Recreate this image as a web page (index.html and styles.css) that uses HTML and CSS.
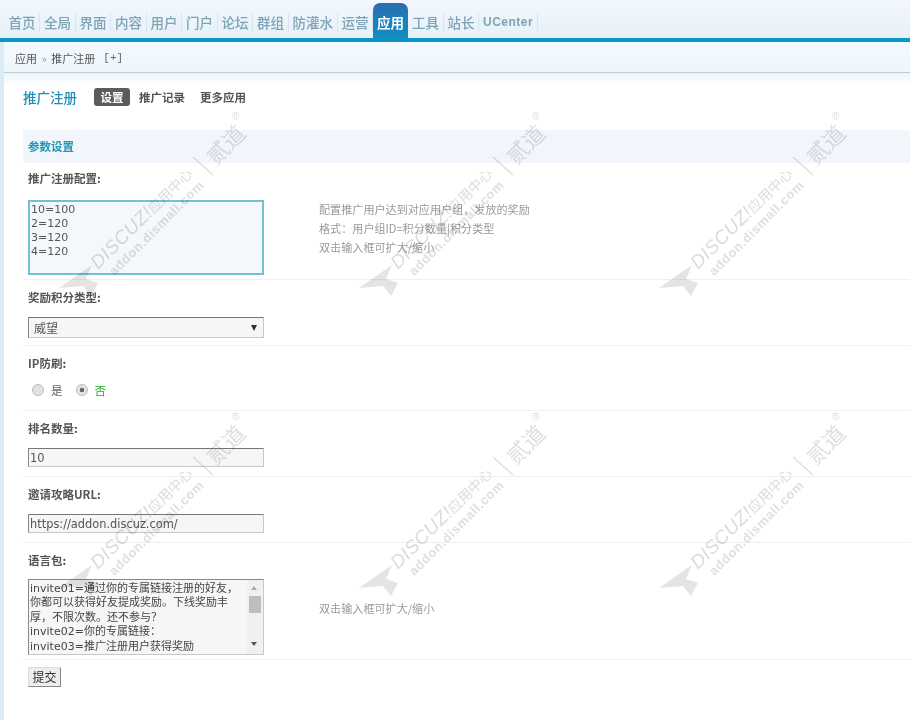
FILE: index.html
```html
<!DOCTYPE html>
<html lang="zh">
<head>
<meta charset="utf-8">
<title>推广注册</title>
<link rel="stylesheet" href="styles.css">
</head>
<body>
<div class="page">
  <header class="topnav">
    <ul class="menu">
      <li>首页</li><li>全局</li><li>界面</li><li>内容</li><li>用户</li><li>门户</li><li>论坛</li><li>群组</li><li>防灌水</li><li>运营</li><li class="active">应用</li><li>工具</li><li>站长</li><li class="latin">UCenter</li>
    </ul>
  </header>
  <div class="shell">
    <div class="crumb"><span>应用</span><span class="chev">»</span><span>推广注册</span><span class="plus">[+]</span></div>
    <main class="content">
      <div class="titlebar">
        <h1>推广注册</h1>
        <nav class="tabs"><span class="tab on">设置</span><span class="tab">推广记录</span><span class="tab">更多应用</span></nav>
      </div>
      <h2 class="section">参数设置</h2>
      <section class="row tight">
        <label class="lbl">推广注册配置:</label>
        <div class="val">
          <textarea class="area focus" rows="4">10=100
2=120
3=120
4=120</textarea>
          <div class="tip">配置推广用户达到对应用户组，发放的奖励<br>格式：用户组ID=积分数量|积分类型<br>双击输入框可扩大/缩小</div>
        </div>
      </section>
      <section class="row short">
        <label class="lbl">奖励积分类型:</label>
        <div class="val"><div class="select"><span>威望</span><i class="caret"></i></div></div>
      </section>
      <section class="row radio-row">
        <label class="lbl">IP防刷:</label>
        <div class="val radios">
          <span class="radio"></span><span class="opt">是</span>
          <span class="radio checked"></span><span class="opt yes">否</span>
        </div>
      </section>
      <section class="row">
        <label class="lbl">排名数量:</label>
        <div class="val"><input class="text" value="10"></div>
      </section>
      <section class="row">
        <label class="lbl">邀请攻略URL:</label>
        <div class="val"><input class="text" value="https://addon.discuz.com/"></div>
      </section>
      <section class="row tight">
        <label class="lbl">语言包:</label>
        <div class="val">
          <div class="langbox">
            <div class="langtext">invite01=通过你的专属链接注册的好友，<br>你都可以获得好友提成奖励。下线奖励丰<br>厚，不限次数。还不参与？<br>invite02=你的专属链接：<br>invite03=推广注册用户获得奖励</div>
            <div class="sbar"><i class="up"></i><b class="thumb"></b><i class="down"></i></div>
          </div>
          <div class="tip tip-mid">双击输入框可扩大/缩小</div>
        </div>
      </section>
      <div class="submit"><button class="btn" type="button">提交</button></div>
    </main>
  </div>
  <div class="marks" aria-hidden="true">
    <svg class="mark" viewBox="0 0 200 200"><g class="wm"><path class="wm-arrow" d="M9 178 42 155 36 169 48 173 41 186 33 176Z"/><g transform="translate(48 160) rotate(-45)"><text class="wm-a" x="0" y="0">DISCUZ!<tspan class="wm-c">应用中心</tspan></text><text class="wm-b" x="7" y="16">addon.dismall.com</text></g><path class="wm-bar" d="M143 47 163 65"/><text class="wm-d" transform="translate(166 56) rotate(-45)">贰道</text><text class="wm-r" x="182" y="10">®</text></g></svg>
    <svg class="mark" viewBox="0 0 200 200"><g class="wm"><path class="wm-arrow" d="M9 178 42 155 36 169 48 173 41 186 33 176Z"/><g transform="translate(48 160) rotate(-45)"><text class="wm-a" x="0" y="0">DISCUZ!<tspan class="wm-c">应用中心</tspan></text><text class="wm-b" x="7" y="16">addon.dismall.com</text></g><path class="wm-bar" d="M143 47 163 65"/><text class="wm-d" transform="translate(166 56) rotate(-45)">贰道</text><text class="wm-r" x="182" y="10">®</text></g></svg>
    <svg class="mark" viewBox="0 0 200 200"><g class="wm"><path class="wm-arrow" d="M9 178 42 155 36 169 48 173 41 186 33 176Z"/><g transform="translate(48 160) rotate(-45)"><text class="wm-a" x="0" y="0">DISCUZ!<tspan class="wm-c">应用中心</tspan></text><text class="wm-b" x="7" y="16">addon.dismall.com</text></g><path class="wm-bar" d="M143 47 163 65"/><text class="wm-d" transform="translate(166 56) rotate(-45)">贰道</text><text class="wm-r" x="182" y="10">®</text></g></svg>
    <svg class="mark" viewBox="0 0 200 200"><g class="wm"><path class="wm-arrow" d="M9 178 42 155 36 169 48 173 41 186 33 176Z"/><g transform="translate(48 160) rotate(-45)"><text class="wm-a" x="0" y="0">DISCUZ!<tspan class="wm-c">应用中心</tspan></text><text class="wm-b" x="7" y="16">addon.dismall.com</text></g><path class="wm-bar" d="M143 47 163 65"/><text class="wm-d" transform="translate(166 56) rotate(-45)">贰道</text><text class="wm-r" x="182" y="10">®</text></g></svg>
    <svg class="mark" viewBox="0 0 200 200"><g class="wm"><path class="wm-arrow" d="M9 178 42 155 36 169 48 173 41 186 33 176Z"/><g transform="translate(48 160) rotate(-45)"><text class="wm-a" x="0" y="0">DISCUZ!<tspan class="wm-c">应用中心</tspan></text><text class="wm-b" x="7" y="16">addon.dismall.com</text></g><path class="wm-bar" d="M143 47 163 65"/><text class="wm-d" transform="translate(166 56) rotate(-45)">贰道</text><text class="wm-r" x="182" y="10">®</text></g></svg>
    <svg class="mark" viewBox="0 0 200 200"><g class="wm"><path class="wm-arrow" d="M9 178 42 155 36 169 48 173 41 186 33 176Z"/><g transform="translate(48 160) rotate(-45)"><text class="wm-a" x="0" y="0">DISCUZ!<tspan class="wm-c">应用中心</tspan></text><text class="wm-b" x="7" y="16">addon.dismall.com</text></g><path class="wm-bar" d="M143 47 163 65"/><text class="wm-d" transform="translate(166 56) rotate(-45)">贰道</text><text class="wm-r" x="182" y="10">®</text></g></svg>
  </div>
</div>
</body>
</html>
```
FILE: styles.css
```css
* { box-sizing: border-box; }
html, body { margin: 0; height: 720px; overflow: hidden; background: #fff; }
body { font: 11.5px/20px "Noto Sans CJK SC", "Liberation Sans", sans-serif; color: #444; }
.page { position: relative; width: 910px; height: 720px; overflow: hidden; filter: blur(0.42px); }

.topnav { height: 42px; padding-left: 4px; background: linear-gradient(#f2f7fc, #e6f1f9); border-bottom: 4px solid #0a97c5; }
.menu { display: flex; margin: 0; padding: 0 0 0 0.5px; list-style: none; height: 38px; font-size: 13.5px; font-weight: 500; color: #7ea3b4; }
.menu li { position: relative; height: 19px; margin-top: 13px; padding: 0 3.5px 0 4px; line-height: 19px; border-right: 1px solid #d8e6ef; white-space: nowrap; }
.menu li.active { height: 39px; margin-top: 3px; margin-bottom: -4px; padding: 10px 4px 0 4px; width: 35px; border-right: 0; border-radius: 7px 7px 0 0; background: linear-gradient(#2b6db0, #0d93c4); color: #fff; font-weight: 700; }
.menu li.latin { font: bold 12px/18px "Liberation Sans", sans-serif; letter-spacing: 0.5px; }

.shell { height: 678px; border-left: 4px solid #dcebf5; }
.crumb { display: flex; align-items: center; height: 31px; padding: 2px 0 0 11px; background: linear-gradient(#f3faff, #eef6fc); border-bottom: 1px solid #bdd0da; font-size: 11px; color: #555; }
.chev { margin: 0 4.5px; color: #999; }
.plus { margin-left: 8px; color: #666; font-family: "Liberation Mono", monospace; }

.content { padding: 0 0 0 19px; background: linear-gradient(#edf5fa, #fff 13px) no-repeat; }
.titlebar { display: flex; align-items: center; height: 57px; padding-bottom: 10px; }
.titlebar h1 { margin: 0 17px 0 0; font-size: 13.5px; font-weight: 500; color: #1e90b8; }
.tabs { display: flex; align-items: center; font-size: 11.5px; font-weight: 700; color: #555; }
.tab { margin-right: 15px; }
.tab.on { height: 18px; width: 36px; margin-right: 9px; border-radius: 3px; background: #5c5c5c; color: #fff; line-height: 18px; text-align: center; }

.section { height: 33px; margin: 0; padding-left: 5px; font-size: 11.5px; font-weight: 700; line-height: 33px; color: #2296b9; background: #f1f6fc; }

.row { padding: 5px 0 9px 5px; border-bottom: 1px solid #f0f0f0; }
.row + .row { padding-top: 7px; }
.row.tight { padding-bottom: 4px; }
.row.short { padding-bottom: 7px; }
.row.radio-row { padding-bottom: 10px; }
.lbl { display: block; height: 20px; margin-bottom: 10px; font-weight: 700; color: #555; }
.row.radio-row .lbl { margin-bottom: 7px; }
.section + .row .lbl { margin-bottom: 12px; }
.row.tight:last-of-type .lbl { margin-bottom: 9px; }
.val { display: flex; align-items: flex-start; }

.area, .text, .select, .langbox { width: 236px; font: 11px/14px "DejaVu Sans", "Noto Sans CJK SC", sans-serif; color: #555; }
.area { display: block; height: 75px; margin: 0; padding: 1px 0 0 1px; border: 2px solid #74c0d1; border-radius: 0; outline: 0; background: #f4f8fd; resize: none; overflow: hidden; }
.tip { margin: 0 0 0 55px; font-size: 11.1px; line-height: 19px; color: #9a9a9a; }
.tip-mid { padding-top: 20px; }

.select { display: flex; align-items: center; justify-content: space-between; height: 21px; padding: 0 6px 0 5px; border: 1px solid #c8c8c8; border-top-color: #777; border-left-color: #888; background: #f6f6f6; font: 12px/19px "Noto Sans CJK SC", sans-serif; }
.caret { width: 0; height: 0; border: 3px solid transparent; border-top: 6px solid #333; border-bottom: 0; }

.radios { align-items: center; height: 20px; }
.radio { width: 12px; height: 12px; margin-left: 4px; border: 1px solid #bbb; border-radius: 50%; background: #e2e2e2; }
.radio.checked { background: radial-gradient(#666 0 2px, #e2e2e2 2.6px); }
.opt { margin: 0 9px 0 7px; font-size: 11.5px; color: #666; }
.opt.yes { color: #22b122; }

.text { display: block; height: 19px; margin: 0; padding: 0 1px; border: 1px solid #c8c8c8; border-top-color: #777; border-left-color: #888; border-radius: 0; background: #f6f6f6; outline: 0; font-size: 11.4px; }

.langbox { display: flex; height: 76px; padding: 0 0 0 1px; border: 1px solid #c8c8c8; border-top-color: #888; border-left-color: #888; background: #f6f6f6; line-height: 14.4px; color: #444; }
.langtext { flex: 1; overflow: hidden; white-space: nowrap; font-size: 11px; padding-top: 2px; }
.sbar { position: relative; flex: none; width: 16px; background: #f0f0f0; }
.sbar .thumb { position: absolute; left: 2px; top: 16px; width: 12px; height: 17px; background: #bdbdbd; }
.sbar .up, .sbar .down { position: absolute; left: 4px; width: 0; height: 0; border: 3.5px solid transparent; }
.sbar .up { top: 6px; border-bottom: 4px solid #aaa; border-top: 0; }
.sbar .down { bottom: 8px; border-top: 4px solid #555; border-bottom: 0; }

.submit { padding: 7px 0 0 5px; }
.btn { display: block; width: 33px; height: 20px; padding: 0; border: 1px solid #888; border-top-color: #ddd; border-left-color: #ddd; border-radius: 0; background: #ededed; font: 12px/18px "Noto Sans CJK SC", sans-serif; color: #333; }

.marks { position: absolute; left: 50px; top: 110px; display: grid; grid-template-columns: repeat(3, 300px); grid-auto-rows: 300px; pointer-events: none; mix-blend-mode: multiply; }
.mark { width: 200px; height: 200px; }
.wm-arrow { fill: #e4e4e4; }
.wm-bar { stroke: #ddd; stroke-width: 1.3; fill: none; }
.wm-a { font: italic 400 19px "Liberation Sans", sans-serif; letter-spacing: 0.4px; fill: #dcdcdc; }
.wm-c { font: 400 14px "Noto Sans CJK SC", sans-serif; letter-spacing: 0; }
.wm-b { font: 700 13px "Liberation Sans", sans-serif; letter-spacing: 0.6px; fill: #e0e0e0; }
.wm-d { font: 400 22px "Noto Sans CJK SC", sans-serif; fill: #dfdfdf; }
.wm-r { font: 400 10px "Liberation Sans", sans-serif; fill: #ddd; }
```
